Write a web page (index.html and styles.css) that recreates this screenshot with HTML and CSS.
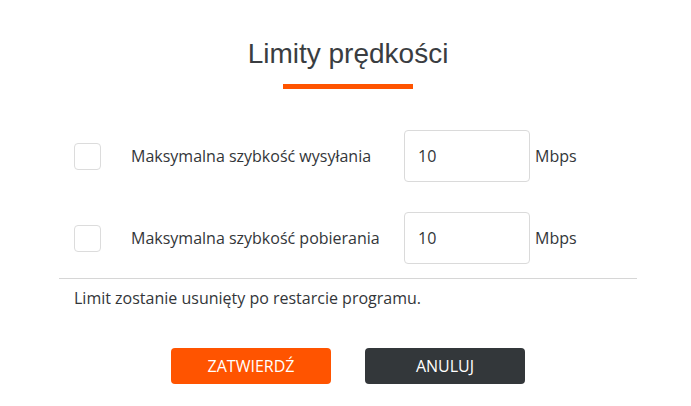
FILE: index.html
```html
<!DOCTYPE html>
<html lang="pl">
<head>
<meta charset="utf-8">
<title>Limity prędkości</title>
<link rel="stylesheet" href="styles.css">
</head>
<body>
<div class="dialog">
  <h1 class="title">Limity prędkości</h1>
  <div class="bar"></div>
  <div class="rows">
    <div class="row">
      <span class="check"></span>
      <span class="label">Maksymalna szybkość wysyłania</span>
      <input class="field" type="text" value="10">
      <span class="unit">Mbps</span>
    </div>
    <div class="row">
      <span class="check"></span>
      <span class="label">Maksymalna szybkość pobierania</span>
      <input class="field" type="text" value="10">
      <span class="unit">Mbps</span>
    </div>
  </div>
  <div class="divider"></div>
  <p class="note">Limit zostanie usunięty po restarcie programu.</p>
  <div class="buttons">
    <button class="btn btn-primary">ZATWIERDŹ</button>
    <button class="btn btn-dark">ANULUJ</button>
  </div>
</div>
</body>
</html>
```
FILE: styles.css
```css
html, body {
  margin: 0;
  padding: 0;
  background: #ffffff;
}
body {
  font-family: "Open Sans", "Liberation Sans", sans-serif;
  color: #333639;
}
.dialog {
  width: 578px;
  margin-left: 59px;
  display: flex;
  flex-direction: column;
}
.title {
  margin: 38px 0 0;
  text-align: center;
  font-family: "Liberation Sans", Arial, sans-serif;
  font-weight: normal;
  font-size: 28px;
  line-height: 32px;
  color: #3a3d41;
}
.bar {
  width: 130px;
  height: 5px;
  margin: 14px auto 0;
  background: #ff5400;
}
.rows {
  margin-top: 41px;
  display: flex;
  flex-direction: column;
  gap: 30px;
}
.row {
  height: 52px;
  display: flex;
  align-items: center;
  padding-left: 15px;
}
.check {
  width: 27px;
  height: 27px;
  box-sizing: border-box;
  border: 1px solid #dcdcdc;
  border-radius: 4px;
  margin-right: 30px;
  flex: none;
}
.label {
  width: 273px;
  font-size: 16px;
  color: #333639;
}
.field {
  width: 126px;
  height: 52px;
  box-sizing: border-box;
  border: 1px solid #dadada;
  border-radius: 4px;
  padding: 0 0 0 13px;
  font-family: "Open Sans", "Liberation Sans", sans-serif;
  font-size: 16px;
  color: #333639;
  background: #fff;
  outline: none;
}
.unit {
  margin-left: 5px;
  font-size: 16px;
  color: #333639;
}
.divider {
  margin-top: 14px;
  border-top: 1px solid #d6d6d6;
}
.note {
  margin: 9px 0 0;
  padding-left: 15px;
  font-size: 16px;
  line-height: 20px;
  color: #333639;
}
.buttons {
  margin-top: 40px;
  display: flex;
  justify-content: center;
  gap: 34px;
}
.btn {
  width: 160px;
  height: 36px;
  border: none;
  border-radius: 4px;
  font-family: "Open Sans", "Liberation Sans", sans-serif;
  font-size: 16px;
  font-weight: 400;
  color: #ffffff;
  padding: 0;
}
.btn-primary {
  background: #ff5400;
}
.btn-dark {
  background: #33373a;
}
```
